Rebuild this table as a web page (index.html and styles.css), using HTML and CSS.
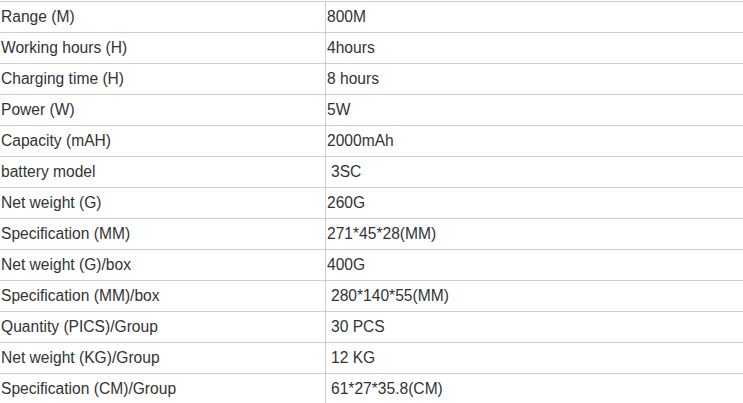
FILE: index.html
```html
<!DOCTYPE html>
<html>
<head>
<meta charset="utf-8">
<link rel="stylesheet" href="styles.css">
</head>
<body>
<table class="spec">
<colgroup><col class="c1"><col class="c2"></colgroup>
<tbody>
<tr><td>Range (M)</td><td>800M</td></tr>
<tr><td>Working hours (H)</td><td>4hours</td></tr>
<tr><td>Charging time (H)</td><td>8 hours</td></tr>
<tr><td>Power (W)</td><td>5W</td></tr>
<tr><td>Capacity (mAH)</td><td>2000mAh</td></tr>
<tr><td>battery model</td><td class="ind">3SC</td></tr>
<tr><td>Net weight (G)</td><td>260G</td></tr>
<tr><td>Specification (MM)</td><td>271*45*28(MM)</td></tr>
<tr><td>Net weight (G)/box</td><td>400G</td></tr>
<tr><td>Specification (MM)/box</td><td class="ind">280*140*55(MM)</td></tr>
<tr><td>Quantity (PICS)/Group</td><td class="ind">30 PCS</td></tr>
<tr><td>Net weight (KG)/Group</td><td class="ind">12 KG</td></tr>
<tr><td>Specification (CM)/Group</td><td class="ind">61*27*35.8(CM)</td></tr>
</tbody>
</table>
</body>
</html>
```
FILE: styles.css
```css
html, body {
  margin: 0;
  padding: 0;
  background: #fff;
  overflow: hidden;
}
.spec {
  border-collapse: collapse;
  table-layout: fixed;
  width: 744px;
  margin: 1px 0 0 -1px;
  font-family: "Liberation Sans", Arial, sans-serif;
  font-size: 15.6px;
  color: #333;
}
.c1 { width: 326px; }
.c2 { width: 418px; }
.spec td {
  border: 1px solid #cfcfcf;
  height: 31px;
  padding: 0 0 0 1px;
  vertical-align: middle;
  white-space: nowrap;
  box-sizing: border-box;
  line-height: 18px;
}
.spec td.ind {
  padding-left: 5px;
}
```
